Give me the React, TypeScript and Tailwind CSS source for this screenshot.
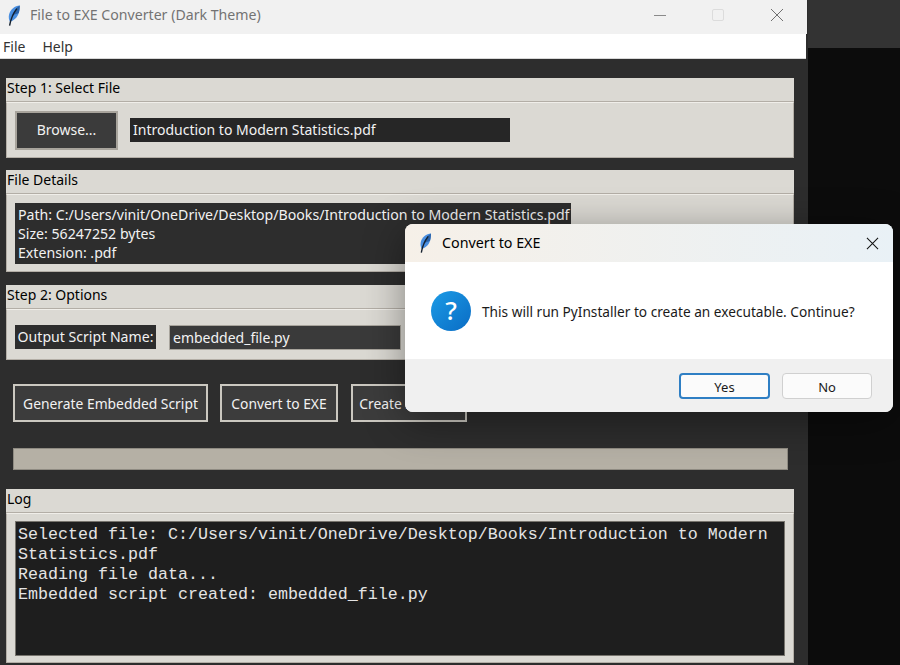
// App.tsx
// File to EXE Converter (Dark Theme) window with its confirm dialog
import React from 'react';

const Feather: React.FC<{ className?: string }> = ({ className }) => (
  <svg viewBox="0 0 14 22" className={className}>
    <path d="M13 0.5 C8 0.8 3 4.5 1.8 10 C1.2 13 1.6 15.6 2.8 17.4 C7 16.4 10.6 13 12 8.4 C12.8 5.6 13 3 13 0.5Z" fill="#4a8fe0" />
    <path d="M13 0.5 C9.6 2.6 6.4 6.6 4.4 11.6 C7 10 9.8 9.4 12 8.4 C12.8 5.6 13 3 13 0.5Z" fill="#2a62a8" />
    <path d="M10 3.8 C6.8 8 3.6 14.6 2.4 21.5" stroke="#14202e" strokeWidth="1.5" fill="none" />
  </svg>
);

interface SectionProps {
  title: string;
  boxClass: string;
  children: React.ReactNode;
}

const Section: React.FC<SectionProps> = ({ title, boxClass, children }) => (
  <div className="bg-[#dbd9d3]">
    <div className="h-6 pl-px text-[14px] leading-[19px] text-black">{title}</div>
    <div className={`border border-[#b3aea6] border-t-[#f0eee9] shadow-[0_-1px_0_#b3aea6] ${boxClass}`}>{children}</div>
  </div>
);

const ActionButton: React.FC<{ label: string; className: string }> = ({ label, className }) => (
  <button className={`h-[38px] border-2 border-[#cbc8c0] bg-[#3c3c3c] pt-[2px] text-[13.85px] text-[#f2f2f2] ${className}`}>{label}</button>
);

export default function App() {
  return (
    <div
      className="relative flex h-[665px] w-[900px] overflow-hidden bg-[#0c0c0c] text-[14px]"
      style={{ fontFamily: '"Noto Sans", sans-serif' }}
    >
      {/* main window */}
      <div className="flex h-full w-[808px] flex-col bg-[#2d2d2d]">
        <div className="mr-px flex h-[34px] items-center bg-[#f1f1f1] pb-[4px] pl-[7px] pr-[2px]">
          <Feather className="h-[21px] w-[14px]" />
          <span className="ml-[9px] text-[14.15px] text-[#737373]">File to EXE Converter (Dark Theme)</span>
          <div className="ml-auto flex items-center">
            <div className="h-[1px] w-[12px] bg-[#8a8a8a]" />
            <div className="ml-[46px] h-[12px] w-[12px] rounded-[2px] border border-[#dcdcdc]" />
            <svg viewBox="0 0 14 14" className="ml-[46px] mr-[21px] h-[14px] w-[14px]">
              <path d="M1 1 L13 13 M13 1 L1 13" stroke="#707070" strokeWidth="1" />
            </svg>
          </div>
        </div>
        <div className="mr-[2px] flex h-[25px] items-center gap-[17px] border-b border-[#d8d8d8] bg-white pl-[3px] text-[14px] text-[#333]">
          <span>File</span>
          <span>Help</span>
        </div>
        <div className="flex flex-1 flex-col pl-[6px] pr-[14px] pt-[19px]">
          <Section title="Step 1: Select File" boxClass="flex h-[56px] items-center pl-[8px]">
            <button className="h-[39px] w-[103px] border-2 border-[#a8a49c] bg-[#3b3b3b] pb-[2px] text-[14px] text-[#f2f2f2]">Browse...</button>
            <div className="ml-[12px] flex h-[24px] w-[380px] items-center bg-[#262626] pb-[2px] pl-[3px] text-[#f2f2f2]">Introduction to Modern Statistics.pdf</div>
          </Section>
          <div className="mt-[12px]">
            <Section title="File Details" boxClass="h-[78px] pl-[8px] pt-[8px]">
              <div className="w-[556px] bg-[#2d2d2d] pb-[2px] pl-[3px] pt-[2px] text-[14.15px] leading-[19px] text-[#f2f2f2]">
                <div>Path: C:/Users/vinit/OneDrive/Desktop/Books/Introduction to Modern Statistics.pdf</div>
                <div>Size: 56247252 bytes</div>
                <div>Extension: .pdf</div>
              </div>
            </Section>
          </div>
          <div className="mt-[13px]">
            <Section title="Step 2: Options" boxClass="flex h-[51px] items-start pl-[8px] pt-[15px]">
              <div className="flex h-[24px] w-[141px] items-center justify-center bg-[#2d2d2d] text-[14.1px] text-[#f2f2f2]">Output Script Name:</div>
              <div className="ml-[13px] flex h-[25px] w-[232px] items-center border border-[#a8a49c] bg-[#3a3a3a] pl-[3px] text-[#f2f2f2]">embedded_file.py</div>
            </Section>
          </div>
          <div className="mt-[24px] flex pl-[7px]">
            <ActionButton label="Generate Embedded Script" className="w-[195px]" />
            <ActionButton label="Convert to EXE" className="ml-[12px] w-[118px]" />
            <ActionButton label="Create Installer" className="ml-[13px] w-[116px]" />
          </div>
          <div className="ml-[7px] mr-[6px] mt-[26px] h-[22px] border border-[#8f8b82] bg-[#b5b0a5]" />
          <div className="mt-[19px]">
            <Section title="Log" boxClass="h-[150px] pl-[8px] pt-[7px]">
              <div
                className="h-[135px] w-[770px] overflow-hidden border border-[#77746d] bg-[#1e1e1e] pl-[2px] pt-[3px] text-[16.67px] leading-[20px] whitespace-pre text-[#e4e4e4]"
                style={{ fontFamily: '"Liberation Mono", monospace' }}
              >
                {'Selected file: C:/Users/vinit/OneDrive/Desktop/Books/Introduction to Modern\nStatistics.pdf\nReading file data...\nEmbedded script created: embedded_file.py'}
              </div>
            </Section>
          </div>
        </div>
      </div>
      {/* bit of the window behind, top right */}
      <div className="h-[48px] flex-1 bg-[#333333]" />

      {/* confirm dialog */}
      <div className="absolute left-[405px] top-[224px] flex h-[188px] w-[488px] flex-col overflow-hidden rounded-[8px] bg-white shadow-[0_8px_40px_rgba(0,0,0,0.4)]">
        <div className="flex h-[38px] items-center bg-gradient-to-r from-[#f6f0e8] to-[#e9f1f6] pl-[14px]">
          <Feather className="h-[20px] w-[13px]" />
          <span className="ml-[10px] text-[14.3px] text-black">Convert to EXE</span>
          <svg viewBox="0 0 14 14" className="ml-auto mr-[14px] h-[13px] w-[13px]">
            <path d="M1 1 L13 13 M13 1 L1 13" stroke="#111" strokeWidth="1.1" />
          </svg>
        </div>
        <div className="flex h-[97px] items-center pl-[26px]">
          <div className="flex h-[40px] w-[40px] items-center justify-center rounded-full bg-gradient-to-br from-[#1c9be6] to-[#0b6cc4] text-[26px] font-medium text-white">?</div>
          <span className="ml-[11px] pt-[3px] text-[13.66px] text-[#1a1a1a]">This will run PyInstaller to create an executable. Continue?</span>
        </div>
        <div className="flex flex-1 items-start justify-end gap-[12px] bg-[#f0f0f0] pr-[21px] pt-[14px]">
          <button className="h-[26px] w-[91px] rounded-[4px] border-2 border-[#2f7fc4] bg-[#fbfbfb] pt-[3px] text-[13px] text-[#1a1a1a]">Yes</button>
          <button className="h-[26px] w-[90px] rounded-[4px] border border-[#d0d0d0] bg-[#fbfbfb] pt-[3px] text-[13px] text-[#1a1a1a]">No</button>
        </div>
      </div>
    </div>
  );
}
